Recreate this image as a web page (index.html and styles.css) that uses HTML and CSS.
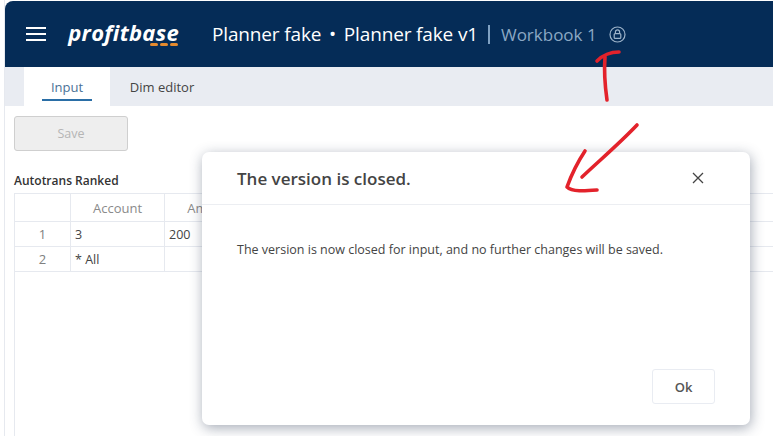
FILE: index.html
```html
<!DOCTYPE html>
<html lang="en">
<head>
    <meta charset="UTF-8">
    <meta name="viewport" content="width=device-width, initial-scale=1.0">
    <title>Planner fake</title>
    <link rel="stylesheet" href="styles.css">
</head>
<body>
    <div class="app">
        <header class="topbar">
            <svg class="menu-icon" width="20" height="16" viewBox="0 0 20 16">
                <path d="M0 2H20M0 8H20M0 14H20" stroke="#fff" stroke-width="2"/>
            </svg>
            <div class="logo">
                <span class="logo-text">profitbase</span>
                <span class="logo-dots"><i></i><i></i><i></i></span>
            </div>
            <div class="crumbs">Planner fake <span class="dot">•</span> Planner fake v1</div>
            <div class="sep"></div>
            <div class="workbook">Workbook 1</div>
            <svg class="lock-icon" width="17" height="17" viewBox="0 0 17 17" fill="none" stroke="#9db3c9">
                <circle cx="8.5" cy="8.5" r="7.5" stroke-width="1.2"/>
                <rect x="5.2" y="7.6" width="6.6" height="4.8" rx="1" stroke-width="1.2"/>
                <path d="M6.4 7.6V6a2.1 2.1 0 0 1 4.2 0v1.6" stroke-width="1.2"/>
            </svg>
        </header>
        <nav class="tabs">
            <div class="tab active"><span>Input</span></div>
            <div class="tab wide"><span>Dim editor</span></div>
        </nav>
        <main class="content">
            <button class="save-btn" disabled>Save</button>
            <div class="sheet-title">Autotrans Ranked</div>
            <div class="sheet">
                <div class="row head">
                    <div class="cell num"></div>
                    <div class="cell account">Account</div>
                    <div class="cell amount">Amount</div>
                </div>
                <div class="row">
                    <div class="cell num">1</div>
                    <div class="cell account left">3</div>
                    <div class="cell amount left">200</div>
                </div>
                <div class="row">
                    <div class="cell num">2</div>
                    <div class="cell account left">* All</div>
                    <div class="cell amount left"></div>
                </div>
            </div>
        </main>
    </div>

    <div class="modal">
        <div class="modal-head">
            <h2>The version is closed.</h2>
            <svg class="close-icon" width="12" height="12" viewBox="0 0 12 12">
                <path d="M1 1L11 11M11 1L1 11" stroke="#444" stroke-width="1.3"/>
            </svg>
        </div>
        <div class="modal-body">The version is now closed for input, and no further changes will be saved.</div>
        <div class="modal-foot">
            <button class="ok-btn">Ok</button>
        </div>
    </div>

    <svg class="scribble" width="773" height="436" viewBox="0 0 773 436" fill="none" stroke="#e3222b" stroke-linecap="round" stroke-linejoin="round" stroke-width="3.6">
        <path d="M597 61C603 55 610 52 619 52"/>
        <path d="M605 57C604 70 605 86 607 100"/>
        <path d="M637 125C620 143 600 160 582 177"/>
        <path d="M585 151C577 163 571 176 567 187C572 192 585 191 597 190"/>
    </svg>
</body>
</html>
```

FILE: styles.css
```css
html, body {
    margin: 0;
    height: 100%;
    overflow: hidden;
}
body {
    font-family: "Open Sans", "Noto Sans", Arial, sans-serif;
    background: #fff;
    color: #444;
}
.app {
    height: 436px;
    margin-left: 4px;
    padding-top: 1px;
    box-sizing: border-box;
    border-left: 1px solid #e6e9ef;
    display: flex;
    flex-direction: column;
}
.topbar {
    height: 66px;
    flex: none;
    background: #052c57;
    border-top-left-radius: 8px;
    display: flex;
    align-items: center;
    color: #fff;
}
.menu-icon {
    margin-left: 21px;
}
.logo {
    width: 113px;
    margin-left: 20px;
    margin-top: -1px;
    display: flex;
    flex-direction: column;
    align-items: flex-end;
}
.logo-text {
    font-family: "Open Sans", sans-serif;
    font-size: 22px;
    line-height: 22px;
    font-weight: 700;
    font-style: italic;
    letter-spacing: 0.3px;
    white-space: nowrap;
}
.logo-dots {
    display: flex;
    gap: 2px;
    margin-right: 1px;
    margin-top: 0;
}
.logo-dots i {
    width: 8px;
    height: 3px;
    border-radius: 2px;
    background: #e58a2e;
}
.crumbs {
    margin-left: 33px;
    font-size: 19px;
    white-space: nowrap;
    letter-spacing: -0.15px;
}
.crumbs .dot {
    margin: 0 3px;
}
.sep {
    width: 2px;
    height: 19px;
    margin-left: 10px;
    background: #7fa1c2;
}
.workbook {
    margin-left: 11px;
    font-size: 17px;
    color: #8ba8c4;
    white-space: nowrap;
}
.lock-icon {
    margin-left: 12px;
}
.tabs {
    height: 39px;
    flex: none;
    padding-left: 19px;
    background: #e9ecf2;
    display: flex;
}
.tab {
    width: 86px;
    display: flex;
    justify-content: center;
    align-items: center;
    font-size: 13px;
    color: #444;
}
.tab.wide {
    width: 104px;
}
.tab.active {
    background: #fff;
    color: #4a7196;
}
.tab.active span {
    align-self: flex-start;
    margin-top: 11px;
    padding: 0 5px 3px;
    border-bottom: 2px solid #2a6ea6;
    width: 40px;
    text-align: center;
}
.content {
    flex: 1;
    padding: 10px 0 0 9px;
    display: flex;
    flex-direction: column;
}
.save-btn {
    width: 114px;
    height: 35px;
    flex: none;
    font-family: inherit;
    font-size: 12.5px;
    color: #b5b5b5;
    background: #eeeeee;
    border: 1px solid #cfcfcf;
    border-radius: 3px;
}
.sheet-title {
    margin-top: 21px;
    font-size: 12px;
    line-height: 17px;
    font-weight: 600;
    color: #333;
}
.sheet {
    flex: 1;
    margin-top: 4px;
    border-left: 1px solid #e6e9ef;
    border-top: 1px solid #e6e9ef;
}
.row {
    height: 24px;
    display: flex;
    border-bottom: 1px solid #e6e9ef;
    font-size: 12.5px;
}
.row.head {
    height: 27px;
    font-size: 13px;
    color: #8a8a8a;
}
.cell {
    box-sizing: border-box;
    display: flex;
    align-items: center;
    justify-content: center;
    border-right: 1px solid #e6e9ef;
    flex: none;
}
.cell.num {
    width: 56px;
    color: #808080;
    font-size: 13px;
}
.cell.account {
    width: 94px;
}
.cell.amount {
    width: 94px;
}
.cell.left {
    justify-content: flex-start;
    padding-left: 4px;
    color: #444;
}
.modal {
    position: absolute;
    left: 202px;
    top: 152px;
    width: 548px;
    height: 273px;
    background: #fff;
    border-radius: 7px;
    box-shadow: 1px 3px 13px rgba(40, 55, 80, 0.42);
    display: flex;
    flex-direction: column;
}
.modal-head {
    height: 53px;
    flex: none;
    box-sizing: border-box;
    padding: 0 46px 0 35px;
    border-bottom: 1px solid #eceef2;
    display: flex;
    align-items: center;
    justify-content: space-between;
}
.modal-head h2 {
    margin: 0;
    font-size: 17px;
    font-weight: 600;
    color: #444;
}
.modal-body {
    padding: 36px 35px 0;
    font-size: 12.5px;
    line-height: 17px;
    color: #444;
    flex: 1;
}
.modal-foot {
    padding: 0 35px 21px;
    display: flex;
    justify-content: flex-end;
}
.ok-btn {
    width: 63px;
    height: 35px;
    font-family: inherit;
    font-size: 13px;
    font-weight: 600;
    color: #555;
    background: #fff;
    border: 1px solid #e9ecf2;
    border-radius: 3px;
}
.scribble {
    position: absolute;
    left: 0;
    top: 0;
}
```
